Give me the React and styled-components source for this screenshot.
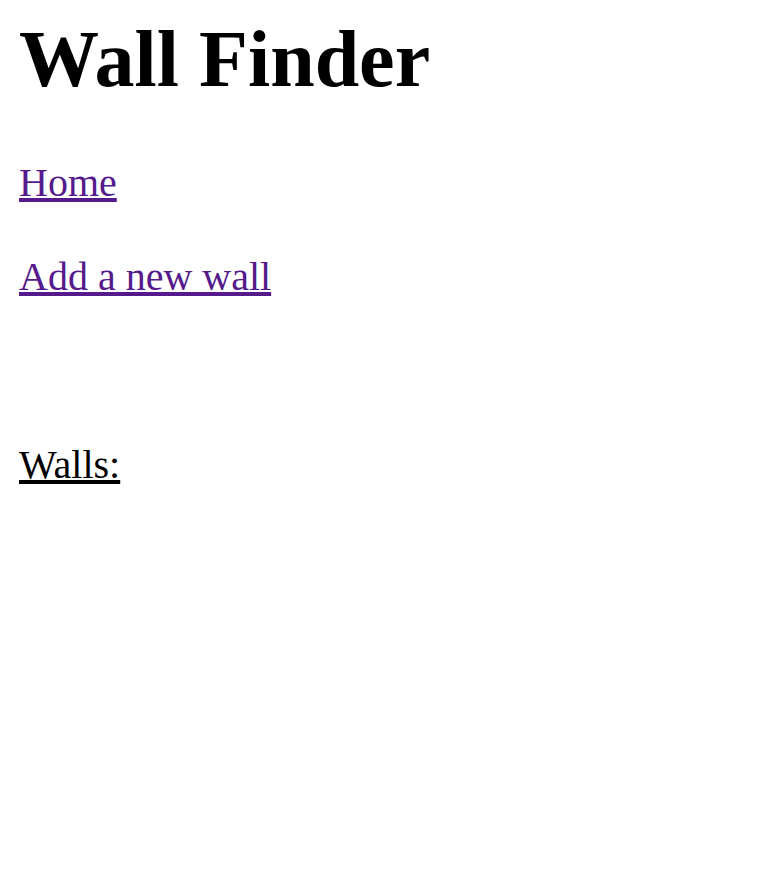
import React from 'react';
import styled, { createGlobalStyle } from 'styled-components';

const GlobalStyle = createGlobalStyle`
  html, body {
    margin: 0;
    padding: 0;
    background: #fff;
  }
  body {
    font-family: "Liberation Serif", "Times New Roman", serif;
    color: #000;
  }
`;

const Page = styled.div`
  padding: 13px 19px 0;
`;

const Title = styled.h1`
  font-size: 80px;
  font-weight: 700;
  line-height: 92px;
  margin: 0;
`;

const Nav = styled.nav`
  display: flex;
  flex-direction: column;
  align-items: flex-start;
  gap: 48px;
  margin-top: 55px;
`;

const NavLink = styled.a`
  font-size: 40px;
  line-height: 46px;
  color: #551a8b;
  text-decoration: underline;
`;

const SectionHeading = styled.div`
  font-size: 40px;
  line-height: 46px;
  text-decoration: underline;
  margin-top: 142px;
`;

export default function App() {
  return (
    <>
      <GlobalStyle />
      <Page>
        <Title>Wall Finder</Title>
        <Nav>
          <NavLink href="#">Home</NavLink>
          <NavLink href="#">Add a new wall</NavLink>
        </Nav>
        <SectionHeading>Walls:</SectionHeading>
      </Page>
    </>
  );
}
